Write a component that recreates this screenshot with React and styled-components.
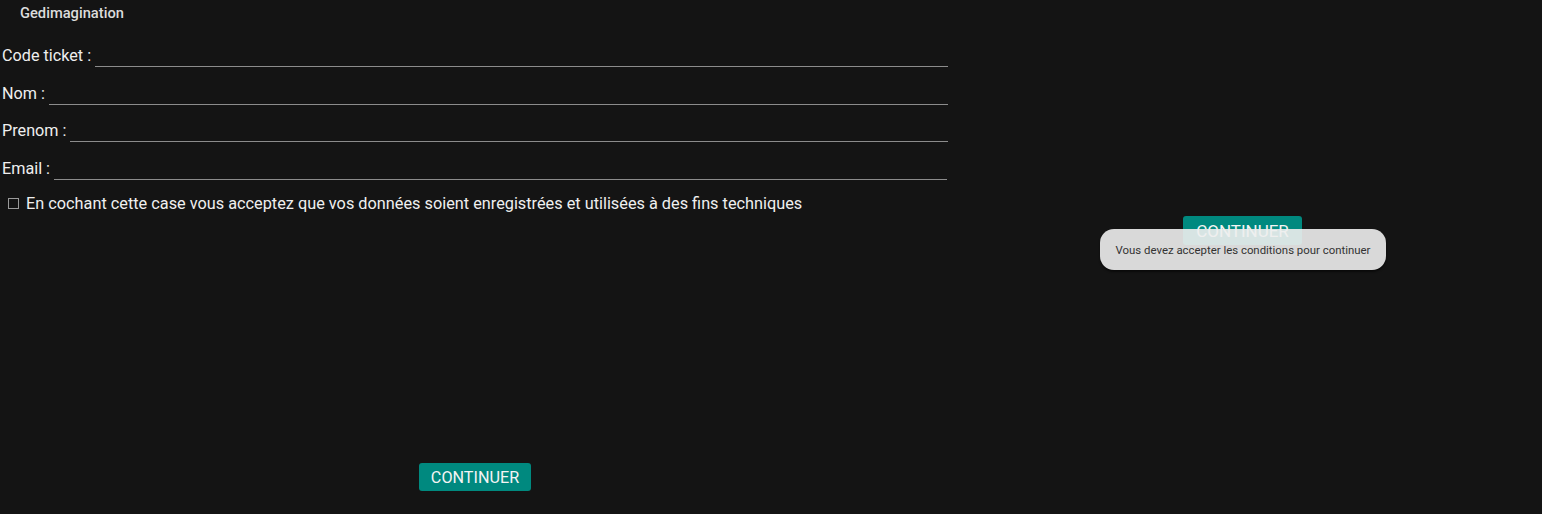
import React from 'react';
import styled, { createGlobalStyle } from 'styled-components';

const GlobalStyle = createGlobalStyle`
  html, body {
    margin: 0;
    padding: 0;
    background: #141414;
  }
  body {
    font-family: Roboto, "Noto Sans", sans-serif;
    color: #ececec;
  }
`;

const Screen = styled.div`
  display: flex;
  width: 1542px;
  height: 514px;
  background: #141414;
  overflow: hidden;
`;

const FormPane = styled.section`
  display: flex;
  flex-direction: column;
  width: 953px;
  height: 100%;
  box-sizing: border-box;
  padding: 0 5px 23px 2px;
`;

const Title = styled.h1`
  margin: 0;
  padding-left: 18px;
  height: 26px;
  line-height: 26px;
  font-size: 14.7px;
  font-weight: 500;
  color: #dcdcdc;
`;

const Fields = styled.div`
  display: grid;
  row-gap: 15.6px;
  margin-top: 19px;
`;

const Row = styled.label`
  display: flex;
  align-items: flex-end;
  height: 22px;
  font-size: 16.2px;
`;

const Label = styled.span`
  line-height: 19px;
  margin-bottom: 2px;
  white-space: nowrap;
  color: #efefef;
`;

const Line = styled.input`
  flex: 1;
  min-width: 0;
  height: 20px;
  margin: 0 ${(p) => p.$trim || 0}px 0 4px;
  padding: 0;
  border: none;
  border-bottom: 1px solid #8c8c8c;
  background: transparent;
  outline: none;
  color: #efefef;
  font: inherit;
`;

const Consent = styled.label`
  display: flex;
  align-items: center;
  gap: 7px;
  margin-top: 14px;
  padding-left: 6px;
  font-size: 16.3px;
  line-height: 19px;
  color: #efefef;
`;

const Box = styled.span`
  width: 9px;
  height: 9px;
  border: 1.5px solid #9a9a9a;
  flex-shrink: 0;
`;

const Spacer = styled.div`
  flex: 1;
`;

const Button = styled.button`
  align-self: center;
  height: ${(p) => (p.$big ? 29 : 28)}px;
  padding: 0 ${(p) => (p.$big ? 13 : 12)}px;
  border: none;
  border-radius: 3px;
  background: #00897f;
  color: #f4f4f4;
  font-family: Roboto, sans-serif;
  font-size: ${(p) => (p.$big ? 17 : 16.2)}px;
  text-transform: uppercase;
  cursor: pointer;
`;

const PreviewPane = styled.section`
  position: relative;
  flex: 1;
  display: flex;
  flex-direction: column;
  padding: 216px 10px 0 0;
`;

const Toast = styled.div`
  position: absolute;
  top: 229px;
  left: 147px;
  width: 286px;
  height: 41px;
  box-sizing: border-box;
  display: flex;
  align-items: center;
  justify-content: center;
  border-radius: 14px;
  background: rgba(238, 238, 238, 0.9);
  box-shadow: 0 2px 2px rgba(0, 0, 0, 0.5);
  color: #333;
  font-size: 11.4px;
`;

const fields = [
  { id: 'code', label: 'Code ticket :' },
  { id: 'nom', label: 'Nom :' },
  { id: 'prenom', label: 'Prenom :' },
  { id: 'email', label: 'Email :', trim: 1 },
];

export default function App() {
  return (
    <>
      <GlobalStyle />
      <Screen>
        <FormPane>
          <Title>Gedimagination</Title>
          <Fields>
            {fields.map((f) => (
              <Row key={f.id}>
                <Label>{f.label}</Label>
                <Line $trim={f.trim} />
              </Row>
            ))}
          </Fields>
          <Consent>
            <Box />
            En cochant cette case vous acceptez que vos données soient enregistrées et utilisées à des fins techniques
          </Consent>
          <Spacer />
          <Button>Continuer</Button>
        </FormPane>
        <PreviewPane>
          <Button $big>Continuer</Button>
          <Toast>Vous devez accepter les conditions pour continuer</Toast>
        </PreviewPane>
      </Screen>
    </>
  );
}
